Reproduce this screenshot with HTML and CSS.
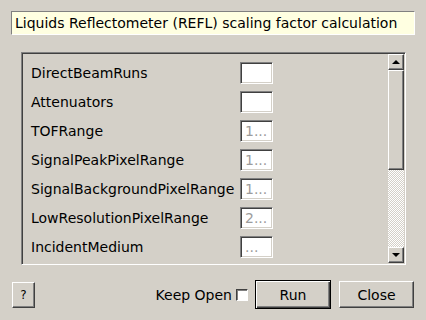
FILE: index.html
```html
<!DOCTYPE html>
<html lang="en">
<head>
    <meta charset="UTF-8">
    <title>Scaling Factor</title>
    <link rel="stylesheet" href="styles.css">
</head>
<body>
    <div class="dialog">
        <div class="title">Liquids Reflectometer (REFL) scaling factor calculation</div>

        <div class="frame">
            <div class="list">
                <div class="row"><label>DirectBeamRuns</label><input type="text"></div>
                <div class="row"><label>Attenuators</label><input type="text"></div>
                <div class="row"><label>TOFRange</label><input type="text" placeholder="1..."></div>
                <div class="row"><label>SignalPeakPixelRange</label><input type="text" placeholder="1..."></div>
                <div class="row"><label>SignalBackgroundPixelRange</label><input type="text" placeholder="1..."></div>
                <div class="row"><label>LowResolutionPixelRange</label><input type="text" placeholder="2..."></div>
                <div class="row"><label>IncidentMedium</label><input type="text" placeholder="..."></div>
            </div>
            <div class="scrollbar">
                <div class="arrow"><span class="tri up"></span></div>
                <div class="handle"></div>
                <div class="track"></div>
                <div class="arrow"><span class="tri down"></span></div>
            </div>
        </div>

        <div class="actions">
            <button class="btn help">?</button>
            <span class="spacer"></span>
            <label class="keep">Keep Open <span class="check"></span></label>
            <button class="btn run">Run</button>
            <button class="btn close">Close</button>
        </div>
    </div>
</body>
</html>
```

FILE: styles.css
```css
body {
    margin: 0;
    background-color: #d4d0c8;
    font-family: 'DejaVu Sans', sans-serif;
    font-size: 14px;
    color: #000;
}

.dialog {
    width: 426px;
    height: 320px;
    padding-top: 11px;
    box-sizing: border-box;
}

/* Description box */
.title {
    margin: 0 11px 0 11px;
    height: 24px;
    line-height: 23px;
    padding-left: 3px;
    background-color: #ffffe1;
    border-top: 1px solid #808080;
    border-left: 1px solid #808080;
    border-bottom: 1px solid #fff;
    border-right: 1px solid #fff;
    box-sizing: border-box;
    white-space: nowrap;
}

/* Scroll area with properties */
.frame {
    display: flex;
    margin: 17px 20px 0 21px;
    height: 213px;
    border-top: 1px solid #808080;
    border-left: 1px solid #808080;
    border-bottom: 1px solid #fff;
    border-right: 1px solid #fff;
    box-shadow: inset 1px 1px #404040, inset -1px -1px #d4d0c8;
    padding: 1px;
    box-sizing: border-box;
    overflow: hidden;
}

.list {
    flex: 1;
    display: flex;
    flex-direction: column;
    gap: 7px;
    padding: 8px 0 0 8px;
    overflow: hidden;
}

.row {
    display: flex;
    align-items: center;
    height: 22px;
    flex-shrink: 0;
}

.row label {
    width: 209px;
    white-space: nowrap;
}

.row input {
    width: 33px;
    height: 22px;
    box-sizing: border-box;
    margin: 0;
    padding: 0 0 0 4px;
    font-family: 'DejaVu Sans', sans-serif;
    font-size: 14px;
    background-color: #fff;
    border-top: 1px solid #808080;
    border-left: 1px solid #808080;
    border-bottom: 1px solid #fff;
    border-right: 1px solid #fff;
    box-shadow: inset 1px 1px #404040, inset -1px -1px #d4d0c8;
    outline: none;
}

.row input::placeholder {
    color: #9c9c9c;
}

/* Scrollbar */
.scrollbar {
    width: 16px;
    display: flex;
    flex-direction: column;
}

.arrow, .handle {
    background-color: #d4d0c8;
    border-top: 1px solid #fff;
    border-left: 1px solid #fff;
    border-bottom: 1px solid #404040;
    border-right: 1px solid #404040;
    box-shadow: inset -1px -1px #808080;
    box-sizing: border-box;
}

.arrow {
    height: 16px;
    display: flex;
    align-items: center;
    justify-content: center;
}

.handle {
    height: 100px;
}

.track {
    flex: 1;
    background-color: #fff;
    background-image: conic-gradient(#d4d0c8 0 25%, #fff 0 50%, #d4d0c8 0 75%, #fff 0);
    background-size: 2px 2px;
}

.tri {
    width: 0;
    height: 0;
    border-left: 4px solid transparent;
    border-right: 4px solid transparent;
}

.tri.up {
    border-bottom: 4px solid #000;
    margin-top: -1px;
}

.tri.down {
    border-top: 4px solid #000;
}

/* Bottom buttons */
.actions {
    display: flex;
    align-items: center;
    padding: 0 12px 0 12px;
    margin-top: 15px;
    height: 29px;
}

.spacer {
    flex: 1;
}

.btn {
    font-family: 'DejaVu Sans', sans-serif;
    font-size: 14px;
    color: #000;
    background-color: #d4d0c8;
    border-top: 1px solid #fff;
    border-left: 1px solid #fff;
    border-bottom: 1px solid #404040;
    border-right: 1px solid #404040;
    box-shadow: inset -1px -1px #808080;
    box-sizing: border-box;
    padding: 0;
    margin: 0;
}

.help {
    width: 23px;
    height: 26px;
    font-size: 12px;
}

.keep {
    display: flex;
    align-items: center;
    gap: 4px;
    margin-right: 7px;
}

.check {
    width: 12px;
    height: 12px;
    background-color: #fff;
    border-top: 1px solid #404040;
    border-left: 1px solid #404040;
    border-bottom: 1px solid #fff;
    border-right: 1px solid #fff;
    box-shadow: inset 1px 1px #808080;
    box-sizing: border-box;
}

.run {
    width: 76px;
    height: 29px;
    border: 1px solid #000;
    box-shadow: inset 1px 1px #fff, inset -1px -1px #404040, inset -2px -2px #808080;
    margin-right: 8px;
}

.close {
    width: 75px;
    height: 27px;
}
```
